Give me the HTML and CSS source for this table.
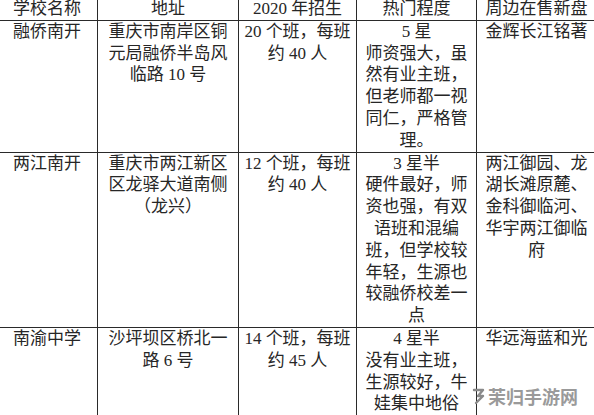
FILE: index.html
```html
<!DOCTYPE html>
<html lang="zh-CN">
<head>
<meta charset="utf-8">
<title>学校表</title>
<link rel="stylesheet" href="styles.css">
</head>
<body>
<div class="sheet">
  <div class="grid">
    <div class="cell">学校名称</div>
    <div class="cell">地址</div>
    <div class="cell">2020 年招生</div>
    <div class="cell">热门程度</div>
    <div class="cell">周边在售新盘</div>

    <div class="cell">融侨南开</div>
    <div class="cell">重庆市南岸区铜<br>元局融侨半岛风<br>临路 10 号</div>
    <div class="cell">20 个班，每班<br>约 40 人</div>
    <div class="cell">5 星<br>师资强大，虽<br>然有业主班，<br>但老师都一视<br>同仁，严格管<br>理。</div>
    <div class="cell">金辉长江铭著</div>

    <div class="cell">两江南开</div>
    <div class="cell">重庆市两江新区<br>区龙驿大道南侧<br>（龙兴）</div>
    <div class="cell">12 个班，每班<br>约 40 人</div>
    <div class="cell">3 星半<br>硬件最好，师<br>资也强，有双<br>语班和混编<br>班，但学校较<br>年轻，生源也<br>较融侨校差一<br>点</div>
    <div class="cell">两江御园、龙<br>湖长滩原麓、<br>金科御临河、<br>华宇两江御临<br>府</div>

    <div class="cell">南渝中学</div>
    <div class="cell">沙坪坝区桥北一<br>路 6 号</div>
    <div class="cell">14 个班，每班<br>约 45 人</div>
    <div class="cell">4 星半<br>没有业主班，<br>生源较好，牛<br>娃集中地俗</div>
    <div class="cell">华远海蓝和光</div>
  </div>
  <div class="watermark">
    <svg class="wm-logo" width="14" height="20" viewBox="0 0 14 20" aria-hidden="true">
      <path d="M2 4 H11 L6 10 H11 L4 17" fill="none" stroke="#8a8a8a" stroke-width="2.4" stroke-linecap="round" stroke-linejoin="round"/>
    </svg>
    <span class="wm-text">茉归手游网</span>
  </div>
</div>
</body>
</html>
```

FILE: styles.css
```css
html, body {
  margin: 0;
  padding: 0;
  background: #ffffff;
}

body {
  width: 594px;
  height: 415px;
  overflow: hidden;
}

.sheet {
  position: relative;
  width: 594px;
  height: 415px;
  overflow: hidden;
}

.grid {
  display: grid;
  grid-template-columns: 100px 140px 117px 119px 119px;
  gap: 1px;
  background: #2a2a2a;
  border: 1px solid #2a2a2a;
  margin: -3px 0 0 -4px;
  width: max-content;
  font-family: "Liberation Serif", "Noto Sans CJK SC", serif;
  font-size: 17px;
  line-height: 21.8px;
  color: #262626;
}

.cell {
  background: #ffffff;
  text-align: center;
  white-space: nowrap;
  padding: 0;
}

.watermark {
  position: absolute;
  left: 472px;
  top: 384px;
  display: flex;
  align-items: center;
  gap: 2px;
}

.wm-text {
  font-family: "Noto Sans CJK SC", sans-serif;
  font-weight: 700;
  font-size: 18px;
  line-height: 24px;
  color: #9a9a9a;
  text-shadow: 0 0 2px #ffffff, 0 0 1px #ffffff;
}
```
